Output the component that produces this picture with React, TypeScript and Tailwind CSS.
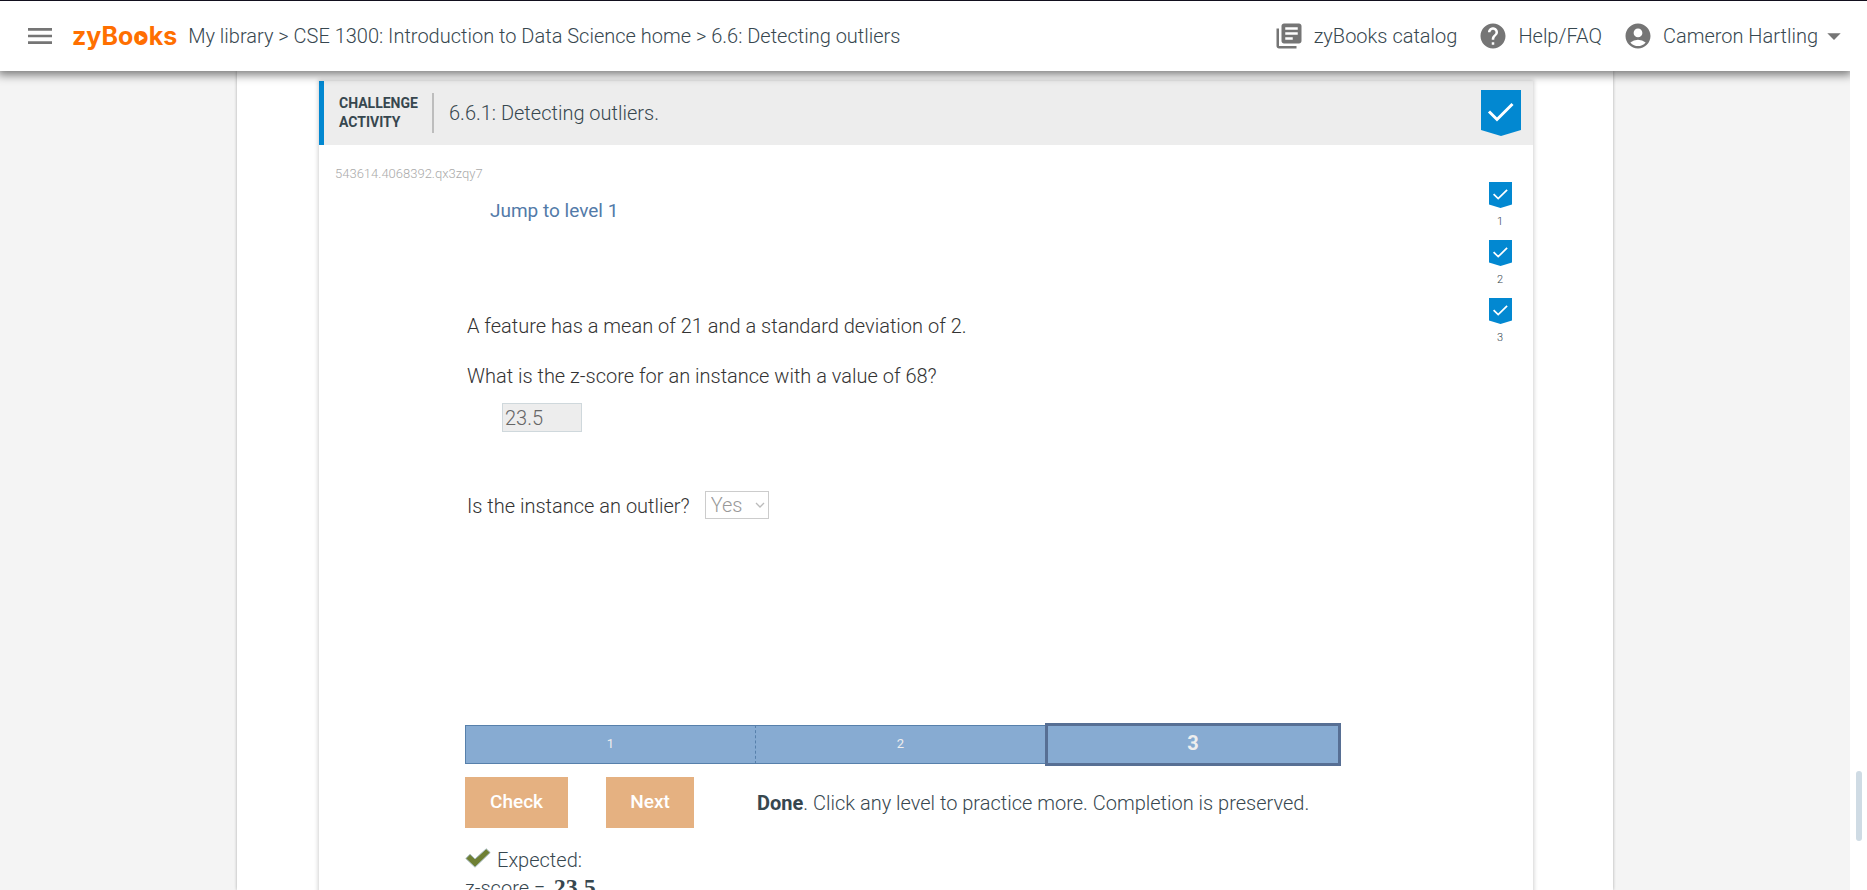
import React from "react";
import { MdMenu, MdLibraryBooks, MdHelp, MdAccountCircle, MdArrowDropDown } from "react-icons/md";

function Bookmark({ className }: { className: string }) {
  return (
    <svg viewBox="0 0 40 46" preserveAspectRatio="none" className={className} aria-hidden="true">
      <path d="M0 0H40V40L20 46L0 40Z" fill="#0288d1" />
      <path d="M8 21.5L16 29.5L31.5 14" fill="none" stroke="#fff" strokeWidth="3" />
    </svg>
  );
}

function Header() {
  return (
    <header className="relative z-10 flex h-[71px] shrink-0 items-center border-t border-[#120f1e] bg-white pr-[17px] pl-6 text-xl font-light text-[#37474f]">
      <button type="button" aria-label="Menu" className="mr-4 text-[#757575]">
        <MdMenu size={32} />
      </button>
      <a href="#home" className="mr-[11px] font-['Inter',sans-serif] text-[25px] leading-8 font-bold text-[#ff6f00]">
        zyBo
        <span className="relative">
          o
          <svg viewBox="0 0 12 12" className="absolute top-[11px] left-0.5 w-3" aria-hidden="true">
            <circle cx="6" cy="6" r="5" fill="#ff6f00" />
            <path d="M3.8 2.6L9.4 6L3.8 9.4Z" fill="#fff" />
          </svg>
        </span>
        ks
      </a>
      <nav aria-label="Breadcrumb">
        <a href="#library">My library</a> &gt; <a href="#course">CSE 1300: Introduction to Data Science home</a> &gt;{" "}
        <span>6.6: Detecting outliers</span>
      </nav>
      <div className="ml-auto flex items-center gap-[21px]">
        <a href="#catalog" className="flex items-center gap-2.5">
          <MdLibraryBooks size={30} className="text-[#757575]" />
          zyBooks catalog
        </a>
        <a href="#help" className="flex items-center gap-2.5">
          <MdHelp size={30} className="text-[#757575]" />
          Help/FAQ
        </a>
        <button type="button" className="flex items-center">
          <MdAccountCircle size={30} className="mr-2.5 text-[#757575]" />
          Cameron Hartling
          <MdArrowDropDown size={32} className="text-[#757575]" />
        </button>
      </div>
    </header>
  );
}

function Levels() {
  return (
    <ol className="flex w-6 flex-col items-center gap-[7px] text-[11px] leading-[22px]">
      {[1, 2, 3].map((n) => (
        <li key={n} className="flex flex-col items-center gap-[3px]">
          <Bookmark className="h-[26px] w-[23px]" />
          <span>{n}</span>
        </li>
      ))}
    </ol>
  );
}

export default function App() {
  return (
    <div className="flex h-screen flex-col overflow-hidden bg-white font-['Roboto',sans-serif] text-xl font-light text-[#37474f]">
      <Header />
      <div className="flex min-h-0 flex-1">
        <div className="relative flex min-w-0 flex-1 justify-center overflow-hidden bg-[#f4f4f4]">
          <div className="absolute inset-x-0 -top-4 z-10 h-4 shadow-[0_2px_10px_2px_rgba(0,0,0,0.5)]" />
          <main className="w-full max-w-[1376px] bg-white pt-[10px] pr-20 pl-[82px] shadow-[0_0_3px_rgba(0,0,0,0.3)]">
            <section className="pb-20 shadow-[0_0_4px_1px_rgba(0,0,0,0.18)]">
              <div className="flex h-16 items-center border-l-[5px] border-[#0288d1] bg-[#ededed] pr-3 pl-[15px]">
                <h2 className="w-[93px] text-sm leading-[19px] font-bold">CHALLENGE ACTIVITY</h2>
                <div className="mr-[15px] h-10 w-0.5 bg-[#bdbdbd]" />
                <h3>6.6.1: Detecting outliers.</h3>
                <Bookmark className="ml-auto h-[46px] w-10" />
              </div>
              <div className="flex pr-[21px] pl-4">
                <div className="min-w-0 flex-1">
                  <p className="pt-5 text-[13px] leading-[18px] text-[#aaa]">543614.4068392.qx3zqy7</p>
                  <div className="ml-[130px] w-[876px]">
                    <button type="button" className="mt-[14px] ml-[25px] block text-[19px] leading-7 font-normal text-[#527aa8]">
                      Jump to level 1
                    </button>
                    <div className="mt-[86px] pl-0.5 leading-[30px] text-[#333]">
                      <p>A feature has a mean of 21 and a standard deviation of 2.</p>
                      <p className="mt-5">
                        <label htmlFor="zscore">What is the z-score for an instance with a value of 68?</label>
                      </p>
                      <input
                        id="zscore"
                        defaultValue="23.5"
                        disabled
                        className="mt-3 ml-[35px] block h-[29px] w-20 border border-[#cfd8dc] bg-[#ededed] px-0.5 text-[#666]"
                      />
                      <div className="mt-[59px] flex items-start gap-[15px]">
                        <label htmlFor="outlier">Is the instance an outlier?</label>
                        <div className="relative">
                          <select
                            id="outlier"
                            disabled
                            defaultValue="Yes"
                            className="block h-[28px] w-16 appearance-none border border-[#ccc] bg-white pl-[5px] leading-[26px] text-[#999]"
                          >
                            <option>Yes</option>
                            <option>No</option>
                          </select>
                          <svg viewBox="0 0 10 6" className="pointer-events-none absolute top-[11px] right-1 w-[10px]" aria-hidden="true">
                            <path d="M1 1L5 5L9 1" fill="none" stroke="#bbb" strokeWidth="1.3" />
                          </svg>
                        </div>
                      </div>
                    </div>
                    <div className="mt-[202px] flex h-[43px] items-center text-[13px] text-[#eee]">
                      <button type="button" className="h-[39px] flex-1 border border-r-0 border-[#5780ab] bg-[#87abd2] font-normal">1</button>
                      <button type="button" className="h-[39px] flex-1 border-y border-l border-[#5780ab] bg-[#87abd2] font-normal [border-left-style:dashed]">2</button>
                      <button type="button" className="h-[43px] w-[296px] border-3 border-[#576f94] bg-[#87abd2] pb-[3px] text-xl font-bold">3</button>
                    </div>
                    <div className="mt-[11px] flex h-[51px] items-center">
                      <button type="button" disabled className="mr-[38px] h-full w-[103px] bg-[#e5b181] text-[19px] font-medium text-white">Check</button>
                      <button type="button" disabled className="mr-[63px] h-full w-[88px] bg-[#e5b181] text-[19px] font-medium text-white">Next</button>
                      <p><b className="font-bold">Done</b>. Click any level to practice more. Completion is preserved.</p>
                    </div>
                    <div className="mt-[18px]">
                      <p className="flex items-start gap-1.5 leading-[29px]">
                        <svg viewBox="0 0 26 20" className="mt-0.5 w-[26px]" aria-hidden="true">
                          <path d="M0.8 10.5L5 6.2L10 11L21.2 0.8L25.2 4.6L10 19.2Z" fill="#6f8034" stroke="#a9bcc4" strokeWidth="1" />
                        </svg>
                        Expected:
                      </p>
                      <p className="leading-[25px]">
                        z-score = <span className="ml-1 font-['Liberation_Serif',serif] text-2xl leading-[25px] font-bold">23.5</span>
                      </p>
                    </div>
                  </div>
                </div>
                <div className="pt-[37px]">
                  <Levels />
                </div>
              </div>
            </section>
          </main>
        </div>
        <div className="flex w-[17px] shrink-0 flex-col items-center bg-white pt-[700px]">
          <div className="h-[70px] w-1.5 rounded-full bg-[#cfdbe4]" />
        </div>
      </div>
    </div>
  );
}
